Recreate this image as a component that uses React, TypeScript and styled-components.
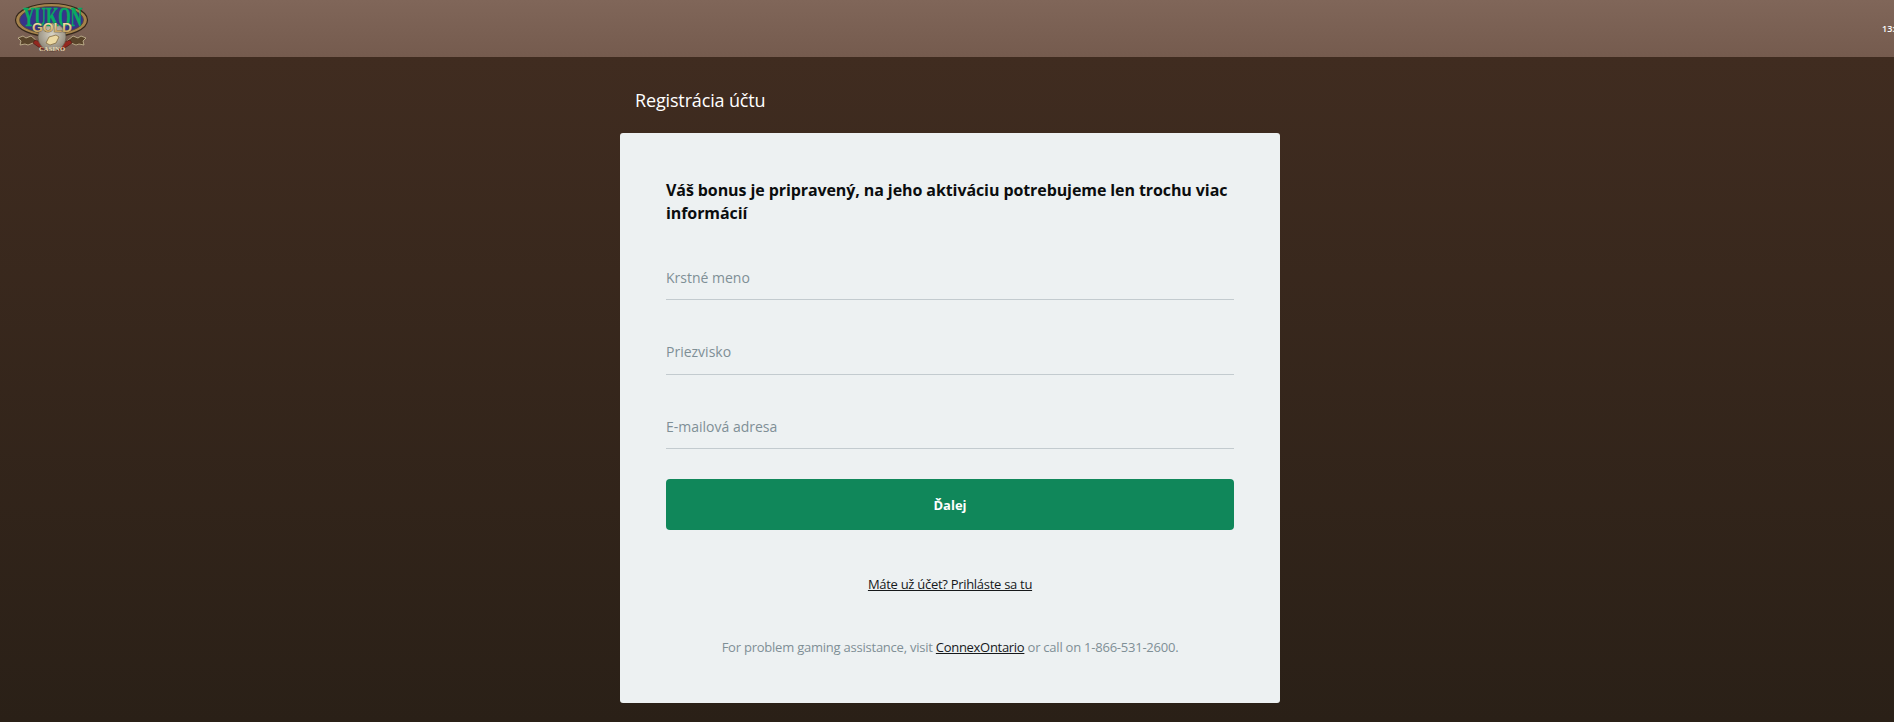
import React from 'react'
import styled, { createGlobalStyle } from 'styled-components'

const GlobalStyle = createGlobalStyle`
    html, body {
        margin: 0;
        padding: 0;
        height: 100%;
    }
    body {
        font-family: "Open Sans", "Noto Sans", sans-serif;
        overflow: hidden;
    }
`

const Logo: React.FC = () => (
    <LogoSvg viewBox="13 0 80 57" width="80" height="57">
        <defs>
            <linearGradient id="gold" x1="0" y1="0" x2="0" y2="1">
                <stop offset="0" stopColor="#f8ecbc" />
                <stop offset="1" stopColor="#b88f48" />
            </linearGradient>
            <radialGradient id="coin" cx="0.5" cy="0.4" r="0.7">
                <stop offset="0" stopColor="#d8d3c4" />
                <stop offset="1" stopColor="#80786a" />
            </radialGradient>
        </defs>
        {/* side ornaments */}
        <path d="M37 41 l-6 -5 l-5 2 l-3 -2 l-5 2 l3 3 l-1 4 l5 -1 l3 1 l5 -2z" fill="#59442a" stroke="#c9bb95" strokeWidth="0.8" />
        <path d="M67 41 l6 -5 l5 2 l3 -2 l5 2 l-3 3 l1 4 l-5 -1 l-3 1 l-5 -2z" fill="#59442a" stroke="#c9bb95" strokeWidth="0.8" />
        {/* oval */}
        <ellipse cx="51.5" cy="20" rx="36" ry="16.5" fill="#a5834c" stroke="#35271b" strokeWidth="1.2" />
        <ellipse cx="51.5" cy="20" rx="32" ry="13.5" fill="#36348a" stroke="#5c4a2c" strokeWidth="0.8" />
        {/* banner and coin */}
        <path d="M33 43 Q52 59 72 43 L70 40 Q52 48 35 40z" fill="#93281f" stroke="#4e1d14" strokeWidth="0.7" />
        <circle cx="52" cy="37" r="14" fill="url(#coin)" stroke="#5f5748" strokeWidth="0.6" />
        <path d="M46 43 l3 -6 l7 -2 l3 2 l-3 6 l-6 2z" fill="#ecd9a2" stroke="#7a6238" strokeWidth="0.7" />
        <LogoTitle x="52.5" y="26" textLength="59" lengthAdjust="spacingAndGlyphs">YUKON</LogoTitle>
        <LogoGold x="52" y="32" textLength="40" lengthAdjust="spacingAndGlyphs">GOLD</LogoGold>
        <LogoCasino x="52" y="51" textLength="26" lengthAdjust="spacing">CASINO</LogoCasino>
    </LogoSvg>
)

const App: React.FC = () => {
    return (
        <Page>
            <GlobalStyle />
            <TopBar>
                <Logo />
                <Clock>13:</Clock>
            </TopBar>
            <Main>
                <Column>
                    <Title>Registrácia účtu</Title>
                    <Card>
                        <Lead>Váš bonus je pripravený, na jeho aktiváciu potrebujeme len trochu viac informácií</Lead>
                        <Field placeholder="Krstné meno" />
                        <Field placeholder="Priezvisko" />
                        <Field placeholder="E-mailová adresa" />
                        <Submit type="button">Ďalej</Submit>
                        <LoginLink href="#">Máte už účet? Prihláste sa tu</LoginLink>
                        <Help>
                            For problem gaming assistance, visit <HelpLink href="#">ConnexOntario</HelpLink> or call on 1-866-531-2600.
                        </Help>
                    </Card>
                </Column>
            </Main>
        </Page>
    )
}

export default App

const Page = styled.div`
    display: flex;
    flex-direction: column;
    width: 1900px;
    height: 722px;
    overflow: hidden;
`

const TopBar = styled.header`
    display: flex;
    align-items: flex-start;
    justify-content: space-between;
    height: 57px;
    flex: none;
    padding-left: 13px;
    box-sizing: border-box;
    overflow: hidden;
    background: linear-gradient(180deg, #806659 0%, #755b4e 100%);
`

const LogoSvg = styled.svg`
    display: block;
    flex: none;
`

const LogoTitle = styled.text`
    font-family: "Liberation Serif", serif;
    font-size: 27px;
    font-weight: 700;
    fill: #08ab62;
    stroke: #08ab62;
    stroke-width: 0.5px;
    text-anchor: middle;
`

const LogoGold = styled.text`
    font-family: "Liberation Sans", sans-serif;
    font-size: 12.5px;
    font-weight: 700;
    fill: url(#gold);
    stroke: #4a3822;
    stroke-width: 0.5px;
    paint-order: stroke;
    text-anchor: middle;
`

const LogoCasino = styled.text`
    font-family: "Liberation Serif", serif;
    font-size: 6.5px;
    font-weight: 700;
    fill: #e8d8b0;
    text-anchor: middle;
`

const Clock = styled.span`
    width: 18px;
    margin-top: 23px;
    font-size: 9px;
    line-height: 12px;
    font-weight: 600;
    white-space: nowrap;
    color: #ffffff;
`

const Main = styled.main`
    flex: 1;
    display: flex;
    justify-content: center;
    background: linear-gradient(180deg, #402c20 0%, #2a2017 100%);
`

const Column = styled.div`
    width: 660px;
    display: flex;
    flex-direction: column;
`

const Title = styled.h1`
    margin: 31px 0 21px 15px;
    font-size: 18px;
    line-height: 24px;
    font-weight: 400;
    letter-spacing: -0.15px;
    color: #ffffff;
`

const Card = styled.section`
    display: flex;
    flex-direction: column;
    height: 570px;
    box-sizing: border-box;
    padding: 46px 46px 0;
    border-radius: 3px;
    background: #edf1f2;
`

const Lead = styled.h2`
    margin: 0 0 27px;
    font-size: 16px;
    line-height: 23px;
    font-weight: 700;
    letter-spacing: -0.09px;
    color: #0b0d0e;
`

const Field = styled.input`
    display: block;
    width: 100%;
    height: 48px;
    box-sizing: border-box;
    margin-bottom: 26.5px;
    padding: 3px 0 0;
    border: none;
    border-bottom: 1px solid #c3cbcf;
    background: transparent;
    outline: none;
    font-family: inherit;
    font-size: 14px;

    &::placeholder {
        color: #7f8f96;
        opacity: 1;
    }
`

const Submit = styled.button`
    display: block;
    width: 100%;
    height: 51px;
    flex: none;
    margin-top: 3.5px;
    border: none;
    border-radius: 4px;
    background: #10875a;
    color: #ffffff;
    font-family: inherit;
    font-size: 13px;
    font-weight: 700;
    cursor: pointer;
`

const LoginLink = styled.a`
    align-self: center;
    margin-top: 45px;
    font-size: 13px;
    line-height: 18px;
    letter-spacing: -0.29px;
    color: #16191b;
    text-decoration: underline;
`

const Help = styled.p`
    margin: 45px 0 0;
    text-align: center;
    font-size: 13px;
    line-height: 18px;
    letter-spacing: -0.23px;
    color: #7f8f96;
`

const HelpLink = styled.a`
    color: #16191b;
    text-decoration: underline;
    letter-spacing: -0.3px;
`
